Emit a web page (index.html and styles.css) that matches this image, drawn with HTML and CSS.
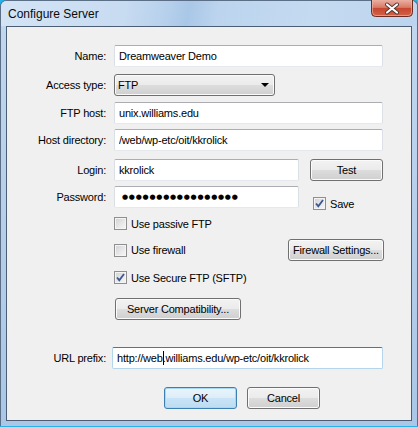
FILE: index.html
```html
<!DOCTYPE html>
<html lang="en">
<head>
  <meta charset="UTF-8">
  <title>Configure Server</title>
  <link rel="stylesheet" href="styles.css">
</head>
<body>

  <div class="window">
    <!-- title bar -->
    <div class="titlebar">
      <span class="title">Configure Server</span>
      <div class="close-btn">
        <svg width="42" height="17" viewBox="0 0 42 17">
          <defs>
            <linearGradient id="redGrad" x1="0" y1="0" x2="0" y2="1">
              <stop offset="0" stop-color="#eab0a2"/>
              <stop offset="0.45" stop-color="#d97a66"/>
              <stop offset="0.5" stop-color="#c8462d"/>
              <stop offset="1" stop-color="#d0654a"/>
            </linearGradient>
          </defs>
          <path d="M0.5 0 V12.5 Q0.5 16.5 4.5 16.5 H37.5 Q41.5 16.5 41.5 12.5 V0" fill="url(#redGrad)" stroke="#6e2b22"/>
          <path d="M1.5 0 V12 Q1.5 15.5 5 15.5 H37 Q40.5 15.5 40.5 12 V0" fill="none" stroke="#f0b9ab" stroke-opacity="0.6"/>
          <path d="M16 4.5 L26 12.5 M26 4.5 L16 12.5" stroke="#4a3431" stroke-width="4" stroke-linecap="round"/>
          <path d="M16 4.5 L26 12.5 M26 4.5 L16 12.5" stroke="#ffffff" stroke-width="2.2" stroke-linecap="round"/>
        </svg>
      </div>
    </div>

    <div class="client">
      <div class="row row-name">
        <label class="label">Name:</label>
        <input class="field field-wide" type="text" value="Dreamweaver Demo">
      </div>

      <div class="row row-access">
        <label class="label">Access type:</label>
        <div class="select">
          <span>FTP</span>
          <span class="arrow"></span>
        </div>
      </div>

      <div class="row row-host">
        <label class="label">FTP host:</label>
        <input class="field field-wide" type="text" value="unix.williams.edu">
      </div>

      <div class="row row-dir">
        <label class="label">Host directory:</label>
        <input class="field field-wide" type="text" value="/web/wp-etc/oit/kkrolick">
      </div>

      <div class="row row-login">
        <label class="label">Login:</label>
        <input class="field field-short" type="text" value="kkrolick">
        <button class="btn btn-test">Test</button>
      </div>

      <div class="row row-password">
        <label class="label">Password:</label>
        <div class="field field-short password">●●●●●●●●●●●●●●●●●</div>
        <div class="check check-save">
          <span class="box checked">
            <svg width="9" height="9" viewBox="0 0 9 9"><path d="M1 4.5 L3.3 7.2 L8 1" fill="none" stroke="#3d5791" stroke-width="1.8"/></svg>
          </span>
          <span>Save</span>
        </div>
      </div>

      <div class="row row-passive indent">
        <div class="check">
          <span class="box"></span>
          <span>Use passive FTP</span>
        </div>
      </div>

      <div class="row row-firewall indent">
        <div class="check">
          <span class="box"></span>
          <span>Use firewall</span>
        </div>
        <button class="btn btn-firewall">Firewall Settings...</button>
      </div>

      <div class="row row-secure indent">
        <div class="check">
          <span class="box checked">
            <svg width="9" height="9" viewBox="0 0 9 9"><path d="M1 4.5 L3.3 7.2 L8 1" fill="none" stroke="#3d5791" stroke-width="1.8"/></svg>
          </span>
          <span>Use Secure FTP (SFTP)</span>
        </div>
      </div>

      <div class="row row-compat indent">
        <button class="btn btn-compat">Server Compatibility...</button>
      </div>

      <div class="row row-url">
        <label class="label">URL prefix:</label>
        <div class="field field-url focus">http://web<span class="caret"></span>.williams.edu/wp-etc/oit/kkrolick</div>
      </div>

      <div class="row row-actions">
        <button class="btn btn-default">OK</button>
        <button class="btn">Cancel</button>
      </div>
    </div>
  </div>

</body>
</html>
```

FILE: styles.css
```css
html, body {
  margin: 0;
  padding: 0;
}

body {
  width: 418px;
  height: 427px;
  overflow: hidden;
  font-family: "Liberation Sans", Arial, sans-serif;
  font-size: 11px;
  letter-spacing: -0.2px;
  color: #000;
  background: #26b3e9;
}

/* window frame */
.window {
  width: 418px;
  height: 426px;
  box-sizing: border-box;
  border: 1px solid #5b6f86;
  border-bottom: none;
  border-radius: 6px 6px 0 0;
  background: linear-gradient(to bottom, #c2d8ef, #b4cde9 60%, #aac7e7);
}

.titlebar {
  height: 25px;
  display: flex;
  justify-content: space-between;
  align-items: flex-start;
  border-radius: 6px 6px 0 0;
  background: linear-gradient(100deg, #d4e4f5 0%, #c7dbf1 30%, #b6d0ec 40%, #a9c7e7 45%, #bcd4ee 52%, #c4daf1 75%, #bcd4ee 100%);
}

.title {
  margin: 6px 0 0 7px;
  font-size: 12px;
  letter-spacing: 0;
  color: #0c0c0c;
}

.close-btn {
  margin: -1px 4px 0 0;
  height: 17px;
}

.close-btn svg {
  display: block;
}

.client {
  margin: 0 5px;
  height: 375px;
  padding-top: 18px;
  border: 1px solid #4c5e74;
  background: #f0f0f0;
}

/* form rows */
.row {
  display: flex;
  align-items: center;
  height: 22px;
}

.indent {
  padding-left: 107px;
}

.label {
  width: 99px;
  margin-right: 8px;
  text-align: right;
  flex-shrink: 0;
}

.row-access   { margin-top: 7px; }
.row-host     { margin-top: 6px; }
.row-dir      { margin-top: 5px; }
.row-login    { margin-top: 8px; }
.row-password { margin-top: 5px; }
.row-passive  { margin-top: 9px; height: 13px; }
.row-firewall { margin-top: 9px; padding-right: 27px; }
.row-secure   { margin-top: 10px; height: 13px; }
.row-compat   { margin-top: 14px; }
.row-url      { margin-top: 27px; }
.row-actions  { margin-top: 18px; padding-left: 157px; }

/* text boxes */
.field {
  height: 22px;
  box-sizing: border-box;
  margin: 0;
  padding: 0 4px;
  border: 1px solid #dbdfe6;
  border-top-color: #abadb3;
  border-bottom-color: #e3e9ef;
  border-radius: 2px;
  background: #fff;
  font-family: "Liberation Sans", Arial, sans-serif;
  font-size: 11px;
  letter-spacing: -0.2px;
  color: #000;
  line-height: 20px;
  outline: none;
}

.field-wide  { width: 269px; }
.field-short { width: 185px; }

.field-url {
  width: 271px;
  margin-left: -2px;
  white-space: nowrap;
}

.field.focus {
  border-color: #b5d5ec;
  border-top-color: #3d7bad;
}

.caret {
  display: inline-block;
  width: 1px;
  height: 14px;
  margin-right: -1px;
  background: #000;
  vertical-align: -3px;
}

.password {
  font-family: "DejaVu Sans", sans-serif;
  font-size: 7px;
  letter-spacing: 0.75px;
  padding-left: 7px;
  color: #000;
}

/* dropdown */
.select {
  width: 161px;
  height: 22px;
  box-sizing: border-box;
  display: flex;
  align-items: center;
  justify-content: space-between;
  padding: 0 4px 0 3px;
  border: 1px solid #707070;
  border-radius: 3px;
  background: linear-gradient(to bottom, #f2f2f2 0%, #ebebeb 50%, #dddddd 51%, #cfcfcf 100%);
  box-shadow: inset 0 0 0 1px #fafafa;
}

.arrow {
  width: 0;
  height: 0;
  border-left: 4px solid transparent;
  border-right: 4px solid transparent;
  border-top: 4px solid #000;
  margin-right: 1px;
}

/* buttons */
.btn {
  height: 22px;
  width: 73px;
  padding: 0;
  border: 1px solid #707070;
  border-radius: 3px;
  background: linear-gradient(to bottom, #f2f2f2 0%, #ebebeb 50%, #dddddd 51%, #cfcfcf 100%);
  box-shadow: inset 0 0 0 1px #fbfbfb;
  font-family: "Liberation Sans", Arial, sans-serif;
  font-size: 11px;
  letter-spacing: -0.2px;
  color: #000;
}

.btn-test {
  margin-left: 11px;
}

.btn-firewall {
  margin-left: auto;
  width: 96px;
}

.btn-compat {
  margin-left: 1px;
  width: 126px;
}

.btn-default {
  margin-right: 10px;
  border-color: #3c7fb1;
  background: linear-gradient(to bottom, #eaf5fc 0%, #dcedf8 50%, #c9e4f6 51%, #bcdcf2 100%);
  box-shadow: inset 0 0 0 1px #a9d8f5;
}

/* checkboxes */
.check {
  display: flex;
  align-items: center;
  gap: 4px;
}

.box {
  width: 13px;
  height: 13px;
  box-sizing: border-box;
  border: 1px solid #8f8f8f;
  background: linear-gradient(135deg, #cfd1d4 0%, #e9e9ea 60%, #f8f8f8 100%);
  box-shadow: inset 0 0 0 1px #f4f4f4;
  display: flex;
  align-items: center;
  justify-content: center;
}

.check-save {
  margin-left: 14px;
  align-self: flex-end;
  margin-bottom: -2px;
}
```
